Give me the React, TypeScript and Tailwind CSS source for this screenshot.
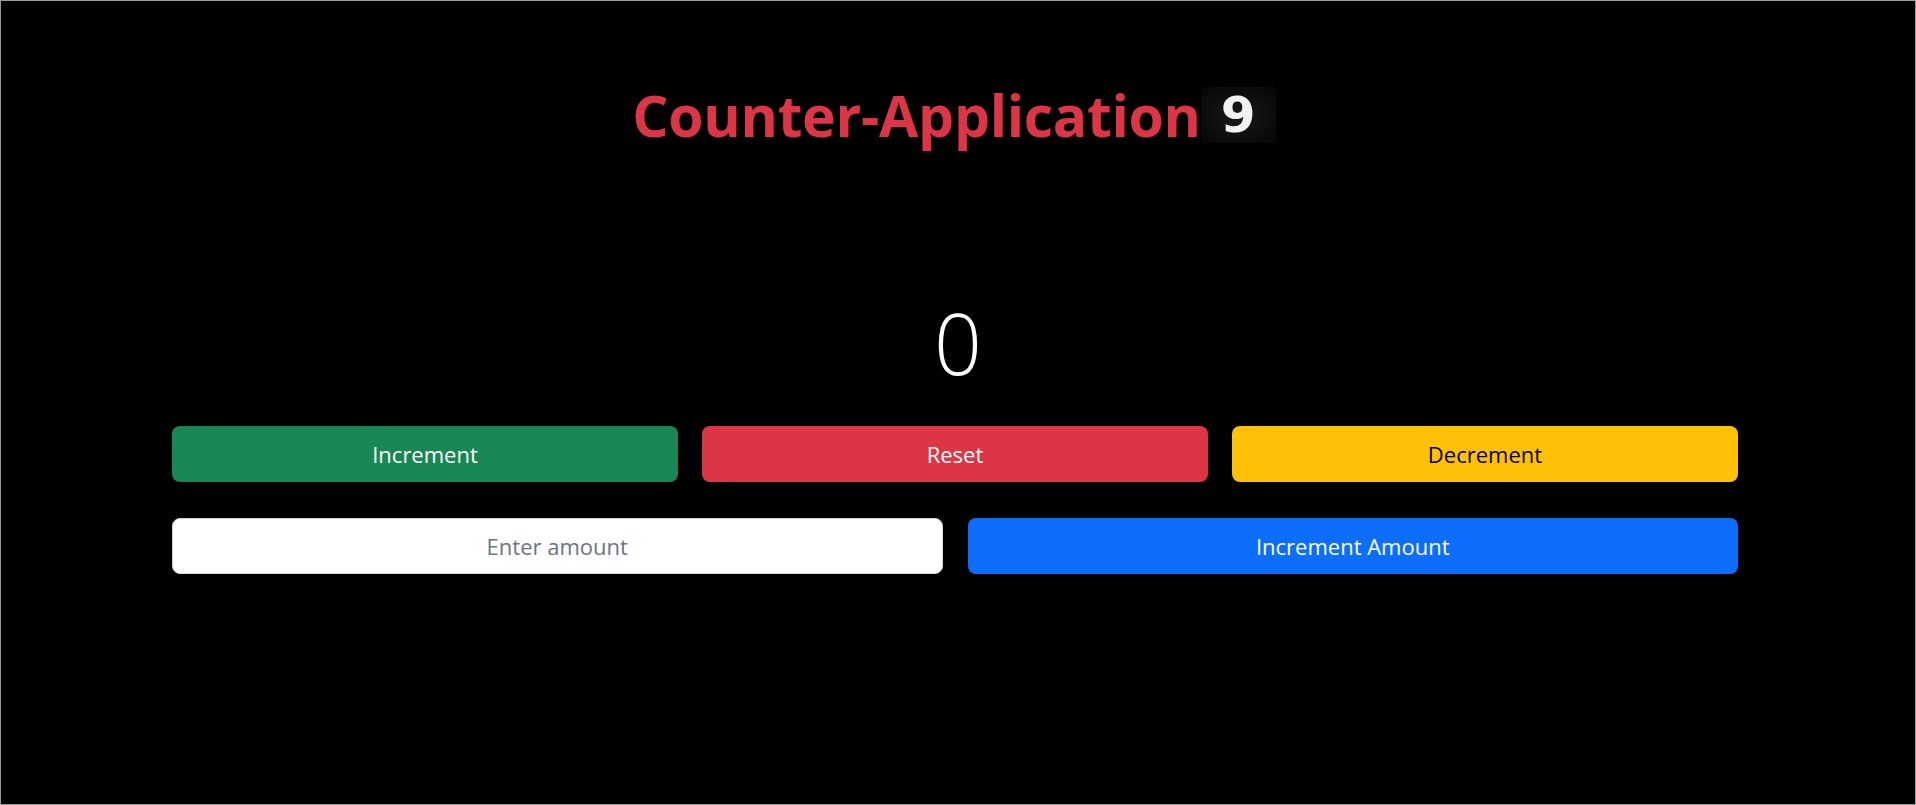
import React from "react";

export default function App() {
  return (
    <div className="w-[1916px] h-[805px] bg-black border border-[#9a9a9a] overflow-hidden" style={{ fontFamily: '"Open Sans", "Noto Sans", sans-serif' }}>
      <div className="flex flex-col items-center pt-[81px]">
        <div className="flex items-center h-[66px] pr-[8px]">
          <h1 className="text-[#dc3545] font-bold text-[57px] leading-none tracking-[-0.3px]">Counter-Application</h1>
          <div className="w-[75px] h-[56px] bg-[#0b0b0b] flex items-center justify-center" style={{ background: "radial-gradient(ellipse at center, #1a1a1a 0%, #0e0e0e 55%, #050505 100%)" }}>
            <span className="text-[#f2f2f2] font-bold text-[50px] leading-none" style={{ fontFamily: '"DejaVu Sans", sans-serif' }}>9</span>
          </div>
        </div>
      </div>
      <div className="flex justify-center mt-[153px]">
        <span className="text-white font-light text-[84px] leading-none">0</span>
      </div>
      <div className="pl-[171px] pr-[177px] mt-[41px] flex flex-col gap-[36px]">
        <div className="grid grid-cols-3 gap-[24px]">
          <button className="h-[56px] rounded-[8px] bg-[#198754] text-white text-[22px]">Increment</button>
          <button className="h-[56px] rounded-[8px] bg-[#dc3545] text-white text-[22px]">Reset</button>
          <button className="h-[56px] rounded-[8px] bg-[#ffc107] text-black text-[22px]">Decrement</button>
        </div>
        <div className="grid grid-cols-2 gap-[25px]">
          <input placeholder="Enter amount" className="h-[56px] rounded-[8px] bg-white border border-[#ced4da] text-center text-[22px] placeholder:text-[#6c757d] outline-none" />
          <button className="h-[56px] rounded-[8px] bg-[#0d6efd] text-white text-[22px]">Increment Amount</button>
        </div>
      </div>
    </div>
  );
}
